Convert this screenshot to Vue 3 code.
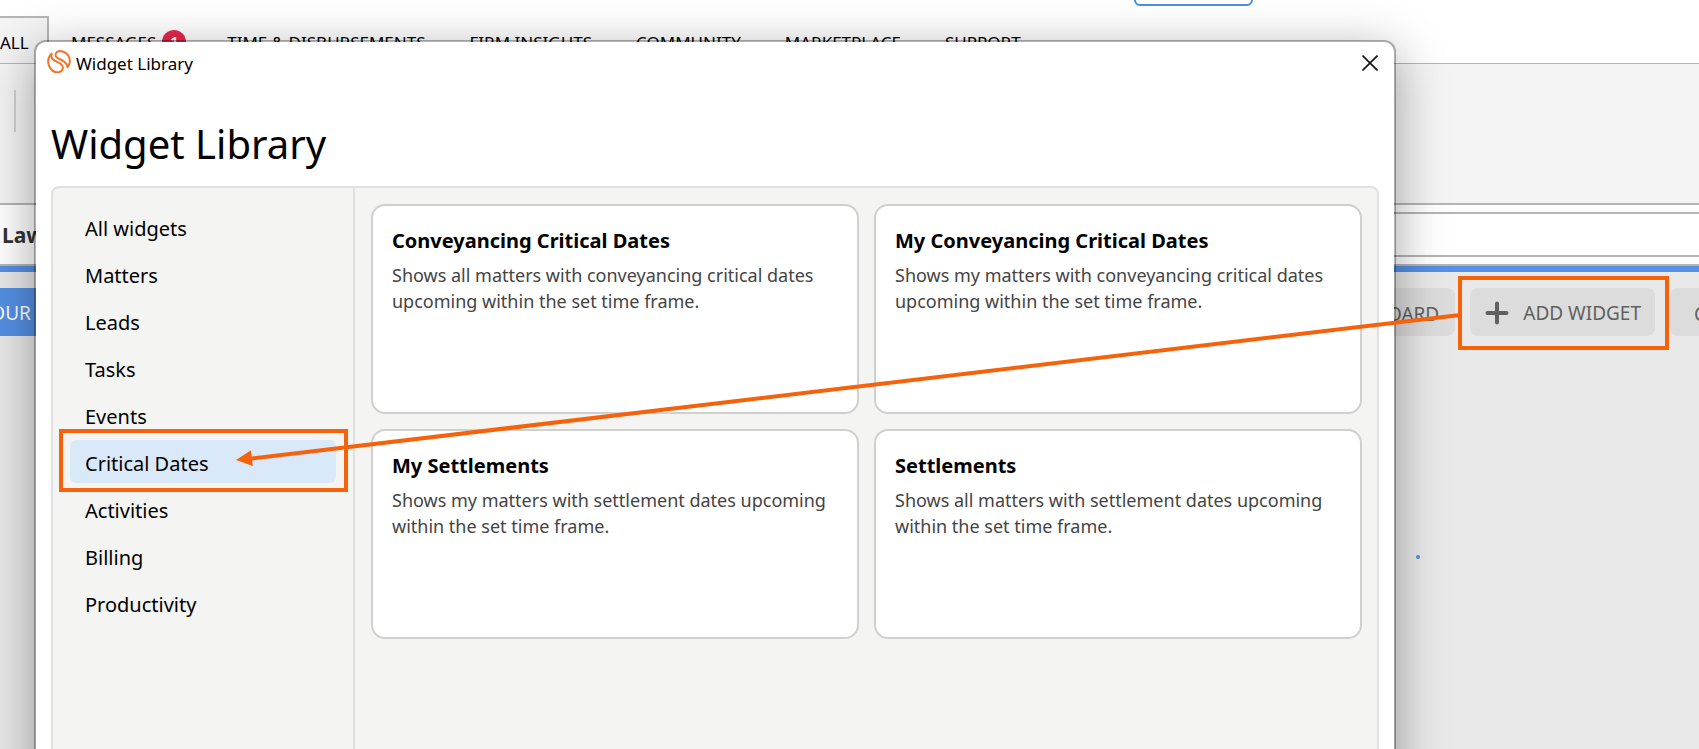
<script setup>
import { ref, reactive, onMounted, onUnmounted } from 'vue';

const tabs = [
    { name: 'MESSAGES', count: 1 },
    { name: 'TIME & DISBURSEMENTS' },
    { name: 'FIRM INSIGHTS' },
    { name: 'COMMUNITY' },
    { name: 'MARKETPLACE' },
    { name: 'SUPPORT' },
];

const categories = ['All widgets', 'Matters', 'Leads', 'Tasks', 'Events', 'Critical Dates', 'Activities', 'Billing', 'Productivity'];
const selected = ref('Critical Dates');

const widgets = [
    { title: 'Conveyancing Critical Dates', text: 'Shows all matters with conveyancing critical dates upcoming within the set time frame.' },
    { title: 'My Conveyancing Critical Dates', text: 'Shows my matters with conveyancing critical dates upcoming within the set time frame.' },
    { title: 'My Settlements', text: 'Shows my matters with settlement dates upcoming within the set time frame.' },
    { title: 'Settlements', text: 'Shows all matters with settlement dates upcoming within the set time frame.' },
];

// Arrow from the Add Widget button to the highlighted category
const addWidget = ref(null);
const sidebar = ref(null);
const arrow = reactive({ x1: 0, y1: 0, x2: 0, y2: 0, angle: 0 });

const placeArrow = () => {
    const from = addWidget.value.getBoundingClientRect();
    const to = sidebar.value.querySelector('.marked').getBoundingClientRect();
    arrow.x1 = from.left - 10;
    arrow.y1 = from.top + 27;
    arrow.x2 = to.left + 166;
    arrow.y2 = to.top + 20;
    arrow.angle = Math.atan2(arrow.y2 - arrow.y1, arrow.x2 - arrow.x1) * 180 / Math.PI;
};

onMounted(() => { placeArrow(); window.addEventListener('resize', placeArrow); });
onUnmounted(() => window.removeEventListener('resize', placeArrow));
</script>

<template>
    <div class="app">
        <div class="top"><button class="outlined" aria-label="Search"></button></div>
        <nav class="tabs">
            <a href="#" class="tab active">ALL</a>
            <a v-for="tab in tabs" :key="tab.name" href="#" class="tab">
                {{ tab.name }}<span v-if="tab.count" class="count">{{ tab.count }}</span>
            </a>
        </nav>
        <div class="ribbon"><span class="separator"></span></div>
        <div class="firm">
            <strong>Law</strong>
            <div class="firm-box"></div>
        </div>
        <div class="toolbar">
            <button class="primary">YOUR D</button>
            <div class="actions">
                <button class="action">DASHBOARD</button>
                <button ref="addWidget" class="action add">
                    <svg width="24" height="24" viewBox="0 0 24 24" aria-hidden="true">
                        <path d="M12 2.5v19M2.5 12h19" stroke="#606060" stroke-width="4" stroke-linecap="round" />
                    </svg>
                    <span>ADD WIDGET</span>
                </button>
                <button class="action cut">C</button>
            </div>
        </div>
        <span class="dot"></span>

        <section class="dialog" role="dialog" aria-labelledby="library-title">
            <header class="titlebar">
                <svg class="logo" width="24" height="24" viewBox="0 0 24 24" fill="none" stroke="#f0752b" stroke-width="2" stroke-linecap="round" stroke-linejoin="round" aria-hidden="true">
                    <path d="M4.6 3.8C1 7.4 .4 12.6 2.6 17C4.6 21 8.4 22.8 12 22.2C15.6 21.4 16.8 18 15 15.2C12.6 11.6 5.4 11.6 4.5 7C4.3 5.7 4.3 4.6 4.6 3.8" />
                    <path d="M10.2 1.8C8.2 3.4 8 6 9.8 7.6C12.4 9.8 19.8 10 20.6 17.2C23.4 13.6 23.6 8.6 21 5.2C18.4 1.6 13.4 .2 10.2 1.8Z" />
                </svg>
                <span>Widget Library</span>
                <button class="close" aria-label="Close">
                    <svg width="16" height="16" viewBox="0 0 16 16" aria-hidden="true">
                        <path d="M.5 .5l15 15M15.5 .5L.5 15.5" stroke="#111" stroke-width="1.6" />
                    </svg>
                </button>
            </header>
            <h1 id="library-title">Widget Library</h1>
            <div class="panel">
                <nav ref="sidebar" class="sidebar">
                    <button v-for="item in categories" :key="item" class="category"
                        :class="{ selected: item === selected, marked: item === 'Critical Dates' }"
                        @click="selected = item">{{ item }}</button>
                </nav>
                <div class="cards">
                    <article v-for="widget in widgets" :key="widget.title" class="card">
                        <h2>{{ widget.title }}</h2>
                        <p>{{ widget.text }}</p>
                    </article>
                </div>
            </div>
        </section>

        <svg class="arrow" aria-hidden="true">
            <line :x1="arrow.x1" :y1="arrow.y1" :x2="arrow.x2 + 12" :y2="arrow.y2 - 1" stroke="#f5620b" stroke-width="4" />
            <path d="M0 0L-16 -8V8Z" fill="#f5620b" :transform="`translate(${arrow.x2} ${arrow.y2}) rotate(${arrow.angle})`" />
        </svg>
    </div>
</template>

<style>
body {
    margin: 0;
}
</style>

<style scoped>
.app {
    position: relative;
    height: 100vh;
    overflow: hidden;
    background: #e9e9e9;
    font-family: "Noto Sans", "Open Sans", sans-serif;
    color: #000;
}

.app *,
.app *::after {
    box-sizing: border-box;
}

button {
    font: inherit;
    border: 0;
    cursor: pointer;
}

.top {
    display: flex;
    justify-content: flex-end;
    height: 16px;
    padding-right: 446px;
    background: #fff;
}

.outlined {
    width: 119px;
    height: 36px;
    margin-top: -30px;
    background: #fff;
    border: 2px solid #4a90e2;
    border-radius: 6px;
}

.tabs {
    display: flex;
    height: 48px;
    background: #fff;
    border-bottom: 1px solid #b5b5b5;
    font-size: 17px;
    line-height: 24px;
}

.tab {
    display: flex;
    padding: 15px 22px 0;
    color: #000;
    text-decoration: none;
    white-space: nowrap;
}

.tab.active {
    width: 49px;
    padding: 13px 0 0;
    background: #f4f4f4;
    border: solid #b5b5b5;
    border-width: 2px 2px 0 0;
}

.count {
    width: 24px;
    height: 24px;
    margin: -1px -3px 0 6px;
    border-radius: 50%;
    background: #e8274d;
    color: #fff;
    font-size: 14px;
    font-weight: 700;
    text-align: center;
}

.ribbon {
    height: 141px;
    padding: 26px 14px;
    background: #f4f4f4;
    border-bottom: 2px solid #b5b5b5;
}

.separator {
    display: block;
    width: 2px;
    height: 42px;
    background: #d0d0d0;
}

.firm {
    display: flex;
    align-items: center;
    gap: 40px;
    height: 67px;
    padding: 0 0 2px 2px;
    background: #fff;
    border-bottom: 6px solid #5590e4;
    box-shadow: inset 0 -2px #b5b5b5;
    font-size: 21px;
    color: #333;
}

.firm-box {
    flex: 1;
    height: 45px;
    border: solid #b5b5b5;
    border-width: 2px 0 2px 2px;
}

.toolbar {
    display: flex;
    justify-content: space-between;
    padding-top: 16px;
    font-size: 19px;
}

.primary {
    height: 48px;
    margin-left: -42px;
    padding: 2px 22px 0;
    background: #5590e4;
    color: #fff;
    white-space: nowrap;
}

.actions {
    display: flex;
    gap: 15px;
}

.action {
    height: 48px;
    padding: 3px 16px 0;
    background: #dcdcdc;
    border-radius: 8px;
    color: #606060;
    white-space: nowrap;
}

.add {
    position: relative;
    display: flex;
    align-items: center;
    gap: 14px;
    padding: 2px 14px 0 15px;
}

.add::after {
    content: "";
    position: absolute;
    inset: -12px -14px -14px -12px;
    border: 4px solid #f5620b;
}

.cut {
    width: 29px;
    padding: 3px 0 0 24px;
    border-radius: 8px 0 0 8px;
    overflow: hidden;
}

.dot {
    position: absolute;
    top: 555px;
    right: 279px;
    width: 4px;
    height: 4px;
    border-radius: 50%;
    background: #5590e4;
}

.dialog {
    position: absolute;
    inset: 40px 303px -100px 34px;
    display: flex;
    flex-direction: column;
    padding: 0 15px;
    background: #fff;
    background-clip: padding-box;
    border: 2px solid rgba(0, 0, 0, 0.3);
    border-radius: 12px;
    box-shadow: 0 12px 50px rgba(0, 0, 0, 0.36);
}

.titlebar {
    display: flex;
    align-items: center;
    gap: 5px;
    height: 42px;
    margin: 0 1px 0 -4px;
    font-size: 17px;
}

.logo {
    margin-bottom: 2px;
}

.close {
    display: flex;
    margin-left: auto;
    padding: 0;
    background: none;
}

h1 {
    margin: 32px 0 14px;
    font-size: 40px;
    font-weight: 400;
    line-height: 56px;
}

.panel {
    flex: 1;
    display: flex;
    background: #f4f4f2;
    border: 2px solid #e0e0e0;
    border-radius: 8px;
}

.sidebar {
    display: flex;
    flex-direction: column;
    gap: 4px;
    width: 302px;
    padding: 17px;
    border-right: 2px solid #e0e0e0;
}

.category {
    position: relative;
    height: 43px;
    padding: 4px 15px 0;
    background: none;
    border-radius: 6px;
    font-size: 20px;
    text-align: left;
}

.category.selected {
    background: #dae9fa;
}

.category.marked::after {
    content: "";
    position: absolute;
    inset: -11px -12px -9px -11px;
    border: 4px solid #f5620b;
}

.cards {
    flex: 1;
    display: grid;
    grid-template-columns: 1fr 1fr;
    grid-auto-rows: 210px;
    gap: 15px;
    padding: 16px 15px 16px 16px;
}

.card {
    padding: 20px 19px;
    background: #fff;
    border: 2px solid #d0d0d0;
    border-radius: 14px;
}

h2 {
    margin: 0 0 6px;
    font-size: 20px;
    line-height: 30px;
}

p {
    margin: 0;
    font-size: 18px;
    line-height: 26px;
    color: #444;
}

.arrow {
    position: absolute;
    inset: 0;
    width: 100%;
    height: 100%;
    pointer-events: none;
}
</style>
